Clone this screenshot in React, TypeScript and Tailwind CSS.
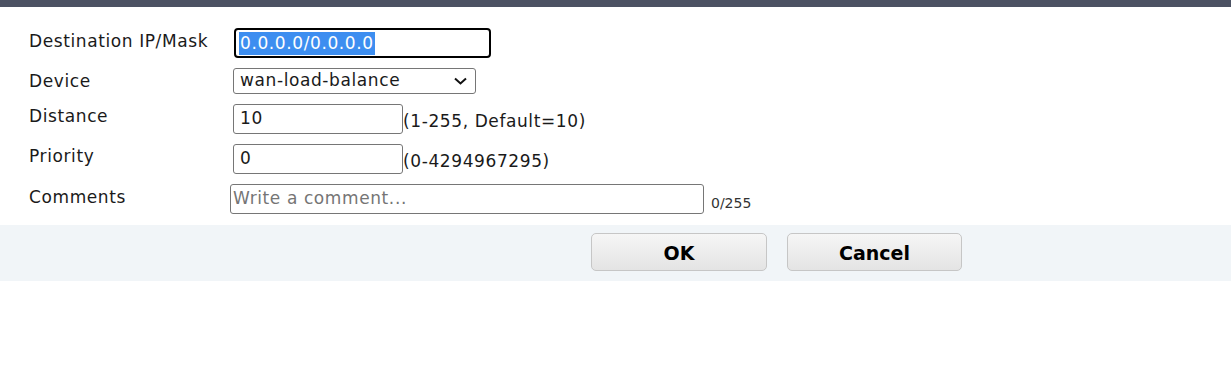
import React from "react";

export default function App() {
  const font = { fontFamily: '"DejaVu Sans", Verdana, sans-serif' };
  return (
    <div className="w-[1231px] h-[367px] bg-white text-[#1a1a1a]" style={font}>
      <div className="h-[7px] bg-[#4c5263]" />
      <div className="pl-[29px] pt-[21px] text-[17px] tracking-[0.6px]">
        <div className="flex h-[40px]">
          <div className="w-[205px] pt-[1px]">Destination IP/Mask</div>
          <div className="w-[257px] h-[30px] border-2 border-black rounded-[4px] flex items-center pl-[3px]">
            <span className="bg-[#3d8ef0] text-white leading-[23px] px-[1px]">0.0.0.0/0.0.0.0</span>
          </div>
        </div>
        <div className="flex h-[36px]">
          <div className="w-[204px] pt-[1px]">Device</div>
          <div className="w-[243px] h-[26px] border border-[#767676] rounded-[3px] flex items-center justify-between pl-[6px] pr-[8px]">
            <span>wan-load-balance</span>
            <svg width="13" height="8" viewBox="0 0 13 8" fill="none" stroke="#111" strokeWidth="2">
              <path d="M1 1.5 L6.5 6.5 L12 1.5" />
            </svg>
          </div>
        </div>
        <div className="flex h-[40px]">
          <div className="w-[204px]">Distance</div>
          <div className="w-[170px] h-[30px] border border-[#767676] rounded-[3px] flex items-center pl-[6px]">10</div>
          <div className="pt-[5px]">(1-255, Default=10)</div>
        </div>
        <div className="flex h-[40px]">
          <div className="w-[204px]">Priority</div>
          <div className="w-[170px] h-[30px] border border-[#767676] rounded-[3px] flex items-center pl-[6px]">0</div>
          <div className="pt-[5px]">(0-4294967295)</div>
        </div>
        <div className="flex h-[41px]">
          <div className="w-[201px] pt-[1px]">Comments</div>
          <div className="w-[474px] h-[30px] border border-[#767676] rounded-[3px] flex items-center pl-[2px] text-[#757575]">Write a comment...</div>
          <div className="pt-[9px] pl-[7px] text-[14px] tracking-normal text-[#333]">0/255</div>
        </div>
      </div>
      <div className="h-[56px] bg-[#f1f5f8] flex pl-[591px] pt-[8px] gap-[20px]">
        <button className="w-[176px] h-[38px] pt-[2px] rounded-[5px] border border-[#c6c6c6] bg-gradient-to-b from-[#f6f6f6] to-[#e4e4e4] font-bold text-[19px] text-black">OK</button>
        <button className="w-[175px] h-[38px] pt-[2px] rounded-[5px] border border-[#c6c6c6] bg-gradient-to-b from-[#f6f6f6] to-[#e4e4e4] font-bold text-[19px] text-black">Cancel</button>
      </div>
    </div>
  );
}
